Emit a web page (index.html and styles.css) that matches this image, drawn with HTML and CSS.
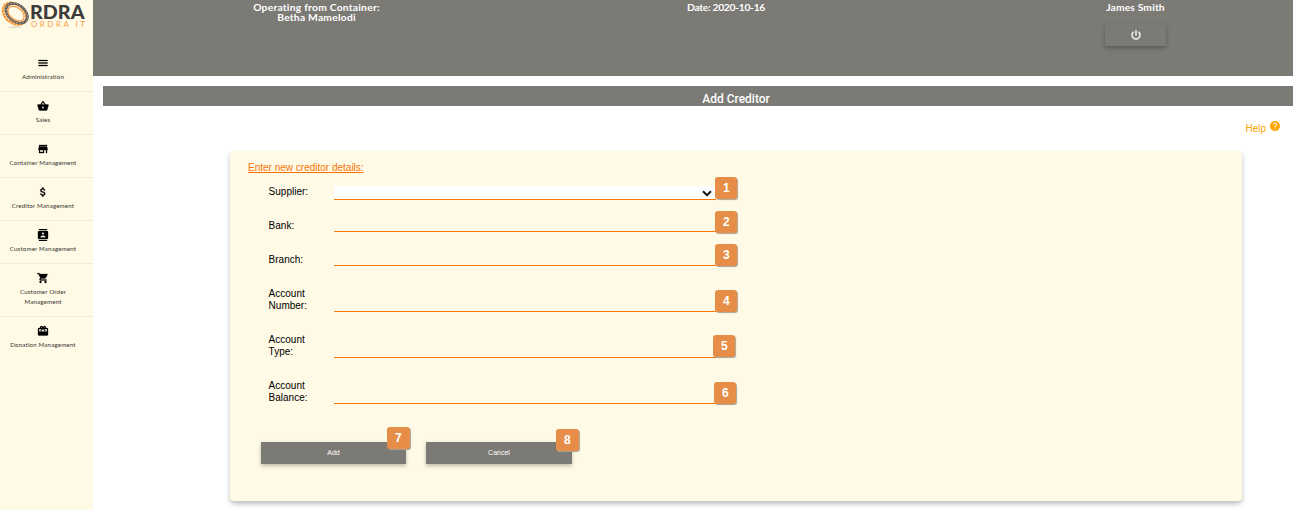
FILE: index.html
```
<!DOCTYPE html>
<html lang="en">
<head>
<meta charset="utf-8">
<title>Add Creditor</title>
<link rel="stylesheet" href="styles.css">
</head>
<body>
<div class="app">
  <aside class="sidebar">
    <svg class="logo" width="93" height="34" viewBox="0 0 93 34">
      <ellipse cx="15" cy="27.3" rx="7" ry="0.8" fill="#dcd6c4"/>
      <g transform="rotate(38 15.5 13.500)" fill="none">
        <ellipse cx="15" cy="14.200" rx="13" ry="9.300" stroke="#f59a3c" stroke-width="2.6" stroke-dasharray="2.6 .5"/>
        <ellipse cx="16.300" cy="12.600" rx="12" ry="8.300" stroke="#5d5852" stroke-width="2.600"/>
        <ellipse cx="16.300" cy="12.600" rx="12" ry="8.300" stroke="#c9c0b0" stroke-width=".8" stroke-dasharray="1.5 1.5"/>
        <ellipse cx="16" cy="13.300" rx="9.200" ry="6" stroke="#f5a04a" stroke-width="1.3"/>
      </g>
      <text class="logo-main" x="30" y="18.500" textLength="54.500" lengthAdjust="spacingAndGlyphs">RDRA</text>
      <text class="logo-sub" x="31" y="26.800" textLength="54">ORDRA IT</text>
    </svg>
    <nav class="menu">
      <a class="item"><svg class="icon" viewBox="0 0 24 24"><path d="M3 18h18v-2H3v2zm0-5h18v-2H3v2zm0-7v2h18V6H3z"/></svg><span>Administration</span></a>
      <a class="item"><svg class="icon" viewBox="0 0 24 24"><path d="M17.21 9l-4.38-6.56c-.19-.28-.51-.42-.83-.42-.32 0-.64.14-.83.43L6.79 9H2c-.55 0-1 .45-1 1 0 .09.01.18.04.27l2.54 9.27c.23.84 1 1.46 1.92 1.46h13c.92 0 1.69-.62 1.93-1.46l2.54-9.27L23 10c0-.55-.45-1-1-1h-4.79zM9 9l3-4.4L15 9H9zm3 8c-1.1 0-2-.9-2-2s.9-2 2-2 2 .9 2 2-.9 2-2 2z"/></svg><span>Sales</span></a>
      <a class="item"><svg class="icon" viewBox="0 0 24 24"><path d="M20 4H4v2h16V4zm1 10v-2l-1-5H4l-1 5v2h1v6h10v-6h4v6h2v-6h1zm-9 4H6v-4h6v4z"/></svg><span>Container Management</span></a>
      <a class="item"><svg class="icon" viewBox="0 0 24 24"><path d="M11.8 10.9c-2.27-.59-3-1.2-3-2.15 0-1.09 1.01-1.85 2.7-1.85 1.78 0 2.44.85 2.5 2.1h2.21c-.07-1.72-1.12-3.3-3.21-3.81V3h-3v2.16c-1.94.42-3.5 1.68-3.5 3.61 0 2.31 1.91 3.46 4.7 4.13 2.5.6 3 1.48 3 2.41 0 .69-.49 1.79-2.7 1.79-2.06 0-2.87-.92-2.98-2.1h-2.2c.12 2.19 1.76 3.42 3.68 3.83V21h3v-2.15c1.95-.37 3.5-1.5 3.5-3.55 0-2.84-2.43-3.81-4.7-4.4z"/></svg><span>Creditor Management</span></a>
      <a class="item"><svg class="icon" viewBox="0 0 24 24"><path d="M20 0H4v2h16V0zM4 24h16v-2H4v2zM20 4H4c-1.1 0-2 .9-2 2v12c0 1.1.9 2 2 2h16c1.1 0 2-.9 2-2V6c0-1.100-.9-2-2-2zm-8 2.750c1.240 0 2.250 1.010 2.250 2.250s-1.010 2.250-2.250 2.250S9.750 10.240 9.750 9 10.760 6.750 12 6.750zM17 17H7v-1.500c0-1.670 3.330-2.500 5-2.500s5 .83 5 2.500V17z"/></svg><span>Customer Management</span></a>
      <a class="item"><svg class="icon" viewBox="0 0 24 24"><path d="M7 18c-1.100 0-1.990.9-1.990 2S5.900 22 7 22s2-.9 2-2-.9-2-2-2zM1 2v2h2l3.600 7.590-1.350 2.450c-.16.28-.25.61-.25.96 0 1.100.9 2 2 2h12v-2H7.420c-.14 0-.25-.11-.25-.25l.03-.12.9-1.630h7.450c.75 0 1.410-.41 1.750-1.030l3.580-6.490A1 1 0 0 0 20 4H5.210l-.94-2H1zm16 16c-1.100 0-1.990.9-1.990 2s.89 2 1.990 2 2-.9 2-2-.9-2-2-2z"/></svg><span>Customer Order<br>Management</span></a>
      <a class="item"><svg class="icon" viewBox="0 0 24 24"><path d="M20 6h-2.180c.11-.31.18-.65.18-1a3 3 0 0 0-5.500-1.650l-.5.670-.5-.680A3 3 0 0 0 6 5c0 .35.070.69.180 1H4c-1.110 0-1.990.89-1.990 2L2 19c0 1.110.89 2 2 2h16c1.110 0 2-.89 2-2V8c0-1.110-.89-2-2-2zm-5-2c.55 0 1 .45 1 1s-.45 1-1 1-1-.45-1-1 .45-1 1-1zM9 4c.55 0 1 .45 1 1s-.45 1-1 1-1-.45-1-1 .45-1 1-1zM4 13V8h5.080L7 10.830 8.620 12 12 7.400l3.380 4.600L17 10.830 14.920 8H20v5z"/></svg><span>Donation Management</span></a>
    </nav>
  </aside>
  <main class="main">
    <header class="topbar">
      <div class="top-cell place">Operating from Container:<br>Betha Mamelodi</div>
      <div class="top-cell date">Date: 2020-10-16</div>
      <div class="top-cell user">James Smith
        <button class="power" aria-label="Log out"><svg width="12" height="12" viewBox="0 0 24 24"><path d="M13 3h-2v10h2V3zm4.830 2.170l-1.420 1.420A6.920 6.920 0 0 1 19 12c0 3.870-3.130 7-7 7A6.995 6.995 0 0 1 7.580 6.580L6.170 5.170A8.932 8.932 0 0 0 3 12a9 9 0 0 0 18 0c0-2.740-1.230-5.180-3.170-6.830z"/></svg></button>
      </div>
    </header>
    <h1 class="page-title">Add Creditor</h1>
    <div class="help">Help
      <svg width="12" height="12" viewBox="0 0 24 24"><path d="M12 2C6.480 2 2 6.480 2 12s4.480 10 10 10 10-4.480 10-10S17.520 2 12 2zm1 17h-2v-2h2v2zm2.070-7.750l-.9.920C13.450 12.900 13 13.500 13 15h-2v-.5c0-1.100.45-2.100 1.170-2.830l1.240-1.260c.37-.36.59-.86.59-1.410 0-1.100-.9-2-2-2s-2 .9-2 2H8c0-2.210 1.790-4 4-4s4 1.790 4 4c0 .88-.36 1.680-.93 2.250z"/></svg>
    </div>
    <form class="card">
      <h2 class="card-title">Enter new creditor details:</h2>
      <div class="row"><label>Supplier:</label><div class="field select"><svg class="chevron" width="10" height="7" viewBox="0 0 10 7"><path d="M1 1.200L5 5.200L9 1.200"/></svg><b class="badge">1</b></div></div>
      <div class="row"><label>Bank:</label><div class="field"><b class="badge b2">2</b></div></div>
      <div class="row"><label>Branch:</label><div class="field"><b class="badge b3">3</b></div></div>
      <div class="row tall"><label>Account Number:</label><div class="field"><b class="badge b4">4</b></div></div>
      <div class="row tall"><label>Account Type:</label><div class="field"><b class="badge b5">5</b></div></div>
      <div class="row tall"><label>Account Balance:</label><div class="field"><b class="badge b6">6</b></div></div>
      <div class="actions">
        <button class="btn" type="button">Add<b class="badge b7">7</b></button>
        <button class="btn cancel" type="button">Cancel<b class="badge b8">8</b></button>
      </div>
    </form>
  </main>
</div>
</body>
</html>
```
FILE: styles.css
```
* { box-sizing: border-box; }
body { margin: 0; background: #fff; font-family: "Liberation Sans", Arial, sans-serif; }
.app { display: flex; height: 510px; overflow: hidden; }

.sidebar { width: 93px; flex: none; background: #fffae6; }
.logo { display: block; height: 34px; margin-bottom: 15px; }
.logo-main { font: 900 19.5px Lato, sans-serif; fill: #3d3b3a; }
.logo-sub { font: 8px Lato, sans-serif; fill: #f9a24d; }
.menu { display: flex; flex-direction: column; }
.item {
  display: flex; flex-direction: column; align-items: center;
  min-height: 43px; padding: 7px 7px 9px 0; gap: 3px;
  border-bottom: 1px solid #f3ead6;
  font: 6.2px/10px Lato, sans-serif; letter-spacing: .15px; color: #37342f; text-align: center;
}
.item:last-child { border-bottom: 0; }
.icon { width: 12px; height: 12px; flex: none; margin-top: 1px; fill: #000; stroke: #000; stroke-width: .6; }

.main { flex: 1; min-width: 0; display: flex; flex-direction: column; }
.topbar {
  display: grid; grid-template-columns: 447px 372px 1fr; height: 76px; flex: none;
  background: #7c7a75; color: #fff; font: 700 10.3px/10px Lato, sans-serif; text-align: center;
  padding-top: 2px;
}
.place { letter-spacing: .23px; }
.date { letter-spacing: -.3px; }
.user { display: flex; flex-direction: column; align-items: center; gap: 12px; width: 447px; letter-spacing: .15px; }
.power {
  display: flex; align-items: center; justify-content: center; width: 61px; height: 22px;
  padding: 0; border: 0; background: #7c7a75; fill: #fff; stroke: #fff; stroke-width: .8;
  box-shadow: 0 2px 4px rgba(0,0,0,.28);
}
.page-title {
  height: 20px; margin: 10px 0 0 10px; flex: none; padding: 3px 0 0 76px; background: #7c7a75; color: #fff;
  font: 500 12px/20px Roboto, sans-serif; text-align: center;
}
.help {
  display: flex; justify-content: flex-end; gap: 3px; height: 45px; padding: 14px 12px 0 0;
  color: #ffa500; fill: #ffa500; font: 10px/18px Roboto, sans-serif;
}
.card {
  width: 1012px; height: 350px; margin-left: 137px; padding: 11px 0 0 18px; background: #fffae6;
  border-radius: 4px; box-shadow: 0 3px 5px rgba(0,0,0,.25);
}
.card-title { margin: 0 0 12px; color: #f97306; font-size: 10px; font-weight: 400; line-height: 12px; text-decoration: underline; }
.row { display: flex; align-items: flex-start; height: 34px; padding-left: 20.6px; font-size: 10px; line-height: 12px; color: #000; }
.row.tall { height: 46px; }
.row label { width: 50px; margin-right: 15.4px; }
.field { position: relative; width: 382px; height: 12px; border-bottom: 1px solid #f57800; }
.tall .field { height: 24px; }
.field.select { height: 14px; background: #fff; }
.chevron { position: absolute; right: 4px; top: 4px; fill: none; stroke: #111; stroke-width: 2; }
.badge {
  position: absolute; left: 381px; top: -9px; width: 22.5px; height: 22px; border-radius: 3px;
  background: #e68e47; color: #fff; box-shadow: 1px 1px 1px #a9a49a;
  font: 700 12px/22px "Liberation Sans", Arial, sans-serif; text-align: center;
}
.b3 { top: -10px; }
.b4 { top: 2px; }
.b5 { top: 1px; left: 379px; }
.b6 { top: 2px; left: 380px; }
.actions { display: flex; gap: 20px; padding: 16px 0 0 13px; }
.btn {
  position: relative; width: 145px; height: 22px; padding: 0; border: 0; background: #7c7a75; color: #fff;
  font: 7px/22px "Liberation Sans", Arial, sans-serif; box-shadow: 0 2px 4px rgba(0,0,0,.25);
}
.btn.cancel { width: 146px; }
.b7 { left: 126px; top: -15px; }
.b8 { left: 130px; top: -13px; }
```
